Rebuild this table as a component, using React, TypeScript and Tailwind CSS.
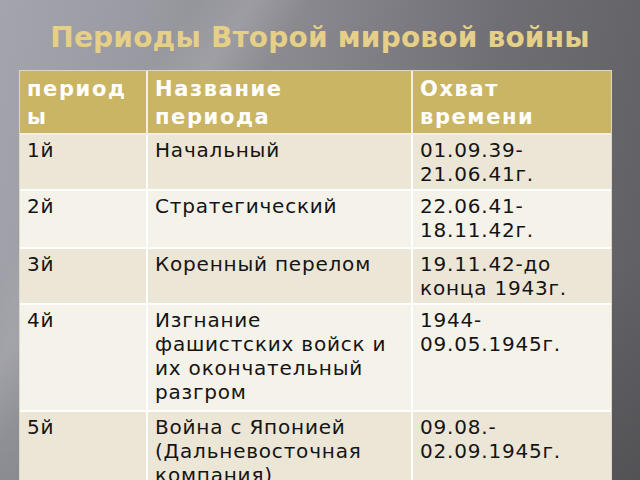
import React from "react";

const rows = [
  { n: "1й", name: ["Начальный"], time: ["01.09.39-", "21.06.41г."], h: "h-[56px]", bg: "bg-[#ece6d6]" },
  { n: "2й", name: ["Стратегический"], time: ["22.06.41-", "18.11.42г."], h: "h-[58px]", bg: "bg-[#f5f2ea]" },
  { n: "3й", name: ["Коренный перелом"], time: ["19.11.42-до", "конца 1943г."], h: "h-[56px]", bg: "bg-[#ece6d6]" },
  {
    n: "4й",
    name: ["Изгнание", "фашистских войск и", "их окончательный", "разгром"],
    time: ["1944-", "09.05.1945г."],
    h: "h-[107px]",
    bg: "bg-[#f5f2ea]",
  },
  {
    n: "5й",
    name: ["Война с Японией", "(Дальневосточная", "компания)"],
    time: ["09.08.-", "02.09.1945г."],
    h: "h-[90px]",
    bg: "bg-[#ece6d6]",
  },
];

function Lines({ lines }: { lines: string[] }) {
  return (
    <>
      {lines.map((l, i) => (
        <div key={i} className="whitespace-nowrap">
          {l}
        </div>
      ))}
    </>
  );
}

export default function App() {
  return (
    <div className="relative w-[640px] h-[480px] overflow-hidden bg-[linear-gradient(100deg,#a4a4ac_0%,#9a9aa2_20%,#86868c_45%,#6e6e74_70%,#5e5e62_100%)] font-['DejaVu_Sans',sans-serif]">
      <div className="absolute inset-0 bg-[linear-gradient(125deg,rgba(255,255,255,0)_20%,rgba(255,255,255,0.12)_26%,rgba(255,255,255,0)_32%,rgba(0,0,0,0)_40%)]" />
      <div className="absolute inset-0 bg-[linear-gradient(180deg,rgba(0,0,0,0)_55%,rgba(0,0,0,0.12)_100%)]" />
      <div className="relative flex flex-col">
        <h1 className="mt-[21px] self-center text-[28px] leading-[34px] font-bold text-[#e6cf86] tracking-[0.2px]">
          Периоды Второй мировой войны
        </h1>
        <div className="mt-[15px] ml-[19px] self-start border border-[#dcd8c8]">
          <table className="border-collapse text-[20px] leading-[24px] text-[#141414]">
            <thead>
              <tr className="h-[63px] bg-[#cab564] text-white font-bold align-top text-[21px] leading-[28px]">
                <td className="w-[127px] px-[7px] pt-[4px] border-r-2 border-b-2 border-[#f3efe2] break-all tracking-[1.6px]">
                  периоды
                </td>
                <td className="w-[265px] px-[7px] pt-[4px] border-r-2 border-b-2 border-[#f3efe2] tracking-[1.6px]">
                  <div>Название</div>
                  <div>периода</div>
                </td>
                <td className="w-[199px] px-[7px] pt-[4px] border-b-2 border-[#f3efe2] tracking-[1.6px]">
                  <div>Охват</div>
                  <div>времени</div>
                </td>
              </tr>
            </thead>
            <tbody>
              {rows.map((r, i) => (
                <tr key={i} className={`${r.h} ${r.bg} align-top`}>
                  <td className="px-[7px] pt-[3px] border-r-2 border-b-2 border-white tracking-[0.8px]">{r.n}</td>
                  <td className="px-[7px] pt-[3px] border-r-2 border-b-2 border-white tracking-[0.8px]">
                    <Lines lines={r.name} />
                  </td>
                  <td className="px-[7px] pt-[3px] border-b-2 border-white tracking-[0.8px]">
                    <Lines lines={r.time} />
                  </td>
                </tr>
              ))}
            </tbody>
          </table>
        </div>
      </div>
    </div>
  );
}
